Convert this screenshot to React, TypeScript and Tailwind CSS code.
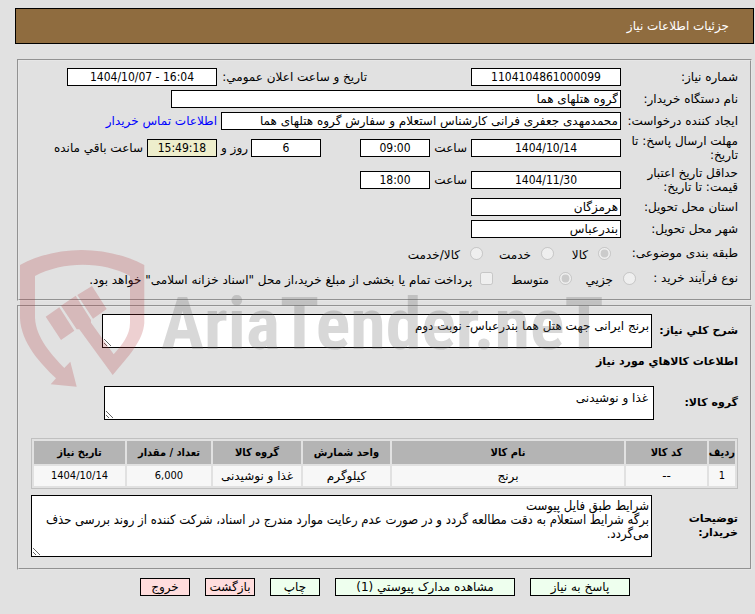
import type { ReactNode } from 'react';

const inputBase = 'h-[18px] border border-black px-[2px] leading-4 text-black';
const numeric = "text-center [font-family:'DejaVu_Sans_Condensed',sans-serif]";

const items = [
  {
    row: '1',
    code: '--',
    name: 'برنج',
    unit: 'کیلوگرم',
    group: 'غذا و نوشیدنی',
    amount: '6,000',
    date: '1404/10/14',
  },
];

const columns = [
  { title: 'ردیف', width: 'w-[26px]' },
  { title: 'کد کالا', width: 'w-[81px]' },
  { title: 'نام کالا', width: '' },
  { title: 'واحد شمارش', width: 'w-[87px]' },
  { title: 'گروه کالا', width: 'w-[88px]' },
  { title: 'تعداد / مقدار', width: 'w-[84px]' },
  { title: 'تاریخ نیاز', width: 'w-[91px]' },
];

const actions = [
  { label: 'پاسخ به نیاز', style: 'w-[100px] bg-[#eeffee]' },
  { label: 'مشاهده مدارک پیوستي (1)', style: 'w-[180px] bg-[#eeffee]' },
  { label: 'چاپ', style: 'w-[50px] bg-[#eeffee]' },
  { label: 'بازگشت', style: 'w-[50px] bg-[#ffdddd]' },
  { label: 'خروج', style: 'w-[50px] bg-[#ffdddd]' },
];

function Row({ id, label, tall, children }: { id: string; label: ReactNode; tall?: boolean; children: ReactNode }) {
  return (
    <div className={tall ? 'flex h-8 items-center' : 'flex h-[22px] items-center'}>
      <label htmlFor={id} className="w-[117px] shrink-0 whitespace-nowrap">
        {label}
      </label>
      {children}
    </div>
  );
}

function Choice({ name, label, checked, className }: { name: string; label: string; checked?: boolean; className: string }) {
  return (
    <label className={`flex items-center gap-2.5 ${className}`}>
      <input type="radio" name={name} disabled defaultChecked={checked} className="size-[13px]" />
      <span className="pt-1">{label}</span>
    </label>
  );
}

function Watermark() {
  return (
    <div dir="ltr" aria-hidden="true" className="pointer-events-none absolute top-[250px] left-5 flex">
      <svg width="125" height="138" viewBox="20 250 125 138" className="shrink-0 fill-[#b23237]/23">
        <path
          fillRule="evenodd"
          d="M20 265C57 245 106 245 144.300 265V323C143 341 128 357 112.700 375L79.300 329.300H76.700L61 305.700L75.700 295.700L91 320V322.700L113.700 354.300C122 345 130 335 130 323V276C103 261 63 261 35 276V318C36 338 52 355 64.300 368L70.300 361.700L76.700 386.700L50.700 384.300L56 378.300C41 364 21 343 20 318Z"
        />
        <path d="M45.700 316.700L59.300 307.300L74.300 330.700L61 340ZM77.300 295L92 286L106.700 309L93 318.700Z" />
      </svg>
      <span className="mt-[9px] ml-4 text-[72px] leading-[132px] font-bold text-[#646464]/25 [font-family:'Liberation_Sans_Narrow','Roboto_Condensed','Liberation_Sans',sans-serif]">
        AriaTender.neT
      </span>
    </div>
  );
}

export default function App() {
  return (
    <main
      dir="rtl"
      className="relative min-h-screen bg-[#e1e1e1] pt-2 pl-[15px] text-xs leading-[14px] text-black [font-family:'DejaVu_Sans',sans-serif]"
    >
      <header className="mr-px flex h-9 items-center border border-black bg-[#8f6c3f] px-6 text-white">
        <h1>جزئیات اطلاعات نیاز</h1>
      </header>

      {/* Need details */}
      <fieldset className="mt-[15px] mr-[3px] ml-[2px] h-[242px] border-2 [border-style:groove] border-[#e6e6e6] pt-[5px] pr-3">
        <Row id="number" label="شماره نیاز:">
          <input id="number" readOnly defaultValue="1104104861000099" className={`${inputBase} ${numeric} w-[150px] bg-white`} />
          <label htmlFor="announced" className="mr-[104px] w-[150px] whitespace-nowrap">
            تاریخ و ساعت اعلان عمومي:
          </label>
          <input id="announced" dir="ltr" readOnly defaultValue="1404/10/07 - 16:04" className={`${inputBase} ${numeric} w-[150px] bg-white`} />
        </Row>
        <Row id="buyer" label="نام دستگاه خریدار:">
          <input id="buyer" readOnly defaultValue="گروه هتلهای هما" className={`${inputBase} w-[450px] bg-white`} />
        </Row>
        <Row id="creator" label="ایجاد کننده درخواست:">
          <input id="creator" readOnly defaultValue="محمدمهدی جعفری فرانی کارشناس استعلام و سفارش گروه هتلهای هما" className={`${inputBase} w-[400px] bg-white`} />
          <a href="#contact" className="mr-1 text-[#0000ff]">
            اطلاعات تماس خریدار
          </a>
        </Row>
        <Row id="deadline" tall label={<>مهلت ارسال پاسخ: تا<br />تاریخ:</>}>
          <input id="deadline" readOnly defaultValue="1404/10/14" className={`${inputBase} ${numeric} w-[150px] bg-white`} />
          <label htmlFor="deadline-hour" className="w-[41px] pr-1">ساعت</label>
          <input id="deadline-hour" readOnly defaultValue="09:00" className={`${inputBase} ${numeric} w-[70px] bg-white`} />
          <input id="days" aria-label="روز" readOnly defaultValue="6" className={`${inputBase} ${numeric} mr-[39px] w-[70px] bg-white`} />
          <label htmlFor="days" className="w-[34px] pr-[3px]">روز و</label>
          <input id="remaining" readOnly defaultValue="15:49:18" className={`${inputBase} ${numeric} w-[70px] bg-[#eeeecc]`} />
          <label htmlFor="remaining" className="pr-1">ساعت باقي مانده</label>
        </Row>
        <Row id="validity" tall label={<>حداقل تاریخ اعتبار<br />قیمت: تا تاریخ:</>}>
          <input id="validity" readOnly defaultValue="1404/11/30" className={`${inputBase} ${numeric} w-[150px] bg-white`} />
          <label htmlFor="validity-hour" className="w-[41px] pr-1">ساعت</label>
          <input id="validity-hour" readOnly defaultValue="18:00" className={`${inputBase} ${numeric} w-[70px] bg-white`} />
        </Row>
        <Row id="province" label="استان محل تحویل:">
          <input id="province" readOnly defaultValue="هرمزگان" className={`${inputBase} w-[150px] bg-white`} />
        </Row>
        <Row id="city" label="شهر محل تحویل:">
          <input id="city" readOnly defaultValue="بندرعباس" className={`${inputBase} w-[150px] bg-white`} />
        </Row>
        <div role="radiogroup" aria-label="طبقه بندی موضوعی" className="flex h-[26px] items-center">
          <span className="w-[127px] shrink-0">طبقه بندی موضوعی:</span>
          <Choice name="category" label="کالا" checked className="w-[57px]" />
          <Choice name="category" label="خدمت" className="w-[71px]" />
          <Choice name="category" label="کالا/خدمت" className="" />
        </div>
        <div role="radiogroup" aria-label="نوع فرآیند خرید" className="flex h-6 items-center">
          <span className="w-[102px] shrink-0">نوع فرآیند خرید :</span>
          <Choice name="process" label="جزیي" className="w-16" />
          <Choice name="process" label="متوسط" checked className="w-[79px]" />
          <label className="flex items-center gap-2">
            <input type="checkbox" disabled className="size-[13px]" />
            <span className="pt-[3px] whitespace-nowrap">پرداخت تمام یا بخشی از مبلغ خرید،از محل "اسناد خزانه اسلامی" خواهد بود.</span>
          </label>
        </div>
      </fieldset>

      {/* Requested goods */}
      <fieldset className="mt-1 mr-[3px] ml-[2px] border-2 [border-style:groove] border-[#e6e6e6] pt-[7px] pr-3 pb-[11px] pl-3">
        <div className="flex items-center">
          <label htmlFor="summary" className="w-[86px] shrink-0 text-[11px] font-bold whitespace-nowrap">شرح کلي نیاز:</label>
          <textarea id="summary" readOnly defaultValue="برنج ایرانی جهت هتل هما بندرعباس- نوبت دوم" className="h-[34px] w-[550px] border border-black bg-white p-[2px] pt-1" />
        </div>
        <h2 className="mt-[7px] text-[11px] leading-[14px] font-bold">اطلاعات کالاهاي مورد نیاز</h2>
        <div className="mt-[17px] flex items-center">
          <label htmlFor="group" className="w-[84px] shrink-0 text-[11px] font-bold">گروه کالا:</label>
          <textarea id="group" readOnly defaultValue="غذا و نوشیدنی" className="h-[34px] w-[550px] border border-black bg-white px-[5px] py-1" />
        </div>

        <table className="mt-[18px] w-full table-fixed border-separate border-spacing-[2px] border border-[#c0c0c0] text-center">
          <thead className="text-[11px] [font-family:'DejaVu_Sans_Condensed',sans-serif]">
            <tr className="h-[23px] bg-[#b4b4b4]">
              {columns.map((column) => (
                <th key={column.title} className={`whitespace-nowrap ${column.width}`}>
                  {column.title}
                </th>
              ))}
            </tr>
          </thead>
          <tbody>
            {items.map((item) => (
              <tr key={item.row} className="h-5 bg-[#f7f7f7]">
                <td className="text-[11px] [font-family:'DejaVu_Sans_Condensed',sans-serif]">{item.row}</td>
                <td>{item.code}</td>
                <td>{item.name}</td>
                <td>{item.unit}</td>
                <td>{item.group}</td>
                <td className="text-[11px] [font-family:'DejaVu_Sans_Condensed',sans-serif]">{item.amount}</td>
                <td className="text-[11px] [font-family:'DejaVu_Sans_Condensed',sans-serif]">{item.date}</td>
              </tr>
            ))}
          </tbody>
        </table>

        <div className="mt-[6px] flex items-center">
          <label htmlFor="notes" className="w-[86px] shrink-0 text-[11px] leading-[14px] font-bold">
            توضیحات
            <br />
            خریدار:
          </label>
          <textarea
            id="notes"
            readOnly
            defaultValue={'شرایط طبق فایل پیوست\nبرگه شرایط استعلام به دقت مطالعه گردد و در صورت عدم رعایت موارد مندرج در اسناد، شرکت کننده از روند بررسی حذف می‌گردد.'}
            className="h-[62px] min-w-0 flex-1 border border-black bg-white p-[2px] pt-[3px] text-[13px] [font-family:'DejaVu_Sans_Condensed',sans-serif]"
          />
        </div>
      </fieldset>

      <div className="mt-2 flex justify-center gap-[15px] pb-4">
        {actions.map((action) => (
          <button key={action.label} type="button" className={`h-[18px] border border-black whitespace-nowrap ${action.style}`}>
            {action.label}
          </button>
        ))}
      </div>

      <Watermark />
    </main>
  );
}
